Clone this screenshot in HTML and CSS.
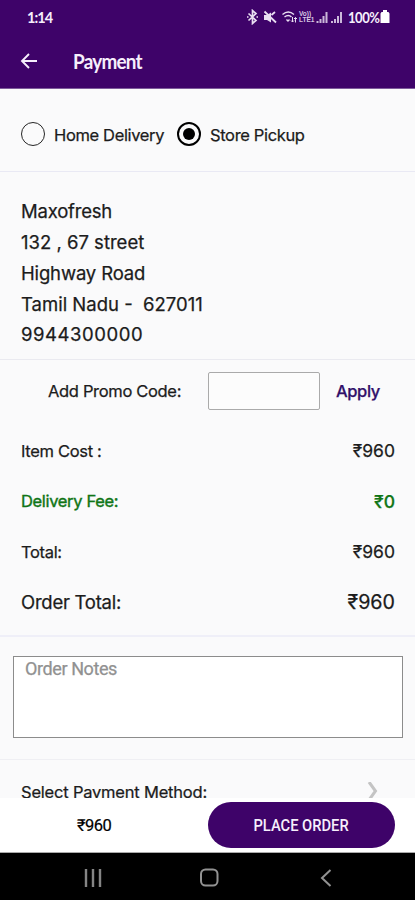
FILE: index.html
```html
<!DOCTYPE html>
<html lang="en">
<head>
<meta charset="utf-8">
<meta name="viewport" content="width=device-width, initial-scale=1">
<title>Payment</title>
<link rel="stylesheet" href="styles.css">
</head>
<body>
<div class="screen">
  <header class="header">
    <div class="status">
      <span class="clock">1:14</span>
      <span class="status-right">
        <svg class="status-icons" width="98" height="16" viewBox="0 0 98 16" fill="none" stroke="#e9dff2" stroke-width="1.5">
          <path d="M2.5 4.5l7.500 7-3.500 3v-13l3.500 3-7.500 7M1 8h1.500M10.500 8H12" stroke-width="1.700"/>
          <path d="M18 6h3l4-2.500v10L21 11h-3z" fill="#e9dff2" stroke="none"/>
          <path d="M18.500 2.500l11.500 11M25.500 6l3.500-3" stroke-width="1.800"/>
          <path d="M36.500 5.500c3.500-3 8-3 11.500 0M38.500 8c2.500-2 5-2 7 0M40.500 10.500l1.500 1.500 1.500-1.500" stroke-width="1.400"/>
          <path d="M46.500 8v5M45 11.500l1.500 1.500 1.500-1.500M49.500 13.500v-5M48 10l1.500-1.500L51 10" stroke-width="1"/>
          <path d="M71.500 14v-2M74.500 14v-4M77.500 14V7M80.500 14V3M86 14v-2M89 14v-4M92 14V7M95 14V3" stroke-width="2" stroke="#cbb8da"/>
        </svg>
        <span class="volte"><span>Vo))</span><span>LTE1</span></span>
        <span class="percent">100%</span>
        <svg class="battery" width="10" height="14" viewBox="0 0 10 14"><path d="M3 0h4v2h1.500l1 1.500V13H.5V3.500l1-1.500H3z" fill="#fff"/></svg>
      </span>
    </div>
    <div class="appbar">
      <svg width="18" height="18" viewBox="0 0 18 18" fill="none" stroke="#f6effc" stroke-width="1.900"><path d="M17 9H2M9 2L2 9l7 7"/></svg>
      <h1 class="title">Payment</h1>
    </div>
  </header>
  <main class="content">
    <section class="delivery">
      <span class="radio"></span><span class="option home">Home Delivery</span>
      <span class="radio checked"></span><span class="option store">Store Pickup</span>
    </section>
    <address class="address">
      <span class="name">Maxofresh</span>
      <span>132 , 67 street</span>
      <span class="road">Highway Road</span>
      <span>Tamil Nadu -&nbsp; 627011</span>
      <span class="phone">9944300000</span>
    </address>
    <section class="bill">
      <div class="promo">
        <label class="promo-label" for="promo">Add Promo Code:</label>
        <input class="promo-input" id="promo" type="text">
        <span class="apply">Apply</span>
      </div>
      <div class="row"><span class="label">Item Cost :</span><span class="amount">₹960</span></div>
      <div class="row free"><span class="label">Delivery Fee:</span><span class="amount">₹0</span></div>
      <div class="row"><span class="label">Total:</span><span class="amount">₹960</span></div>
      <div class="row grand"><span class="label">Order Total:</span><span class="amount">₹960</span></div>
    </section>
    <section class="notes"><textarea class="notes-input" placeholder="Order Notes"></textarea></section>
    <section class="method">
      <span class="method-label">Select Payment Method:</span>
      <svg width="14" height="20" viewBox="0 0 14 20" fill="none" stroke="#c4c4c4" stroke-width="3"><path d="M3 0l6.500 9L3 18"/></svg>
    </section>
  </main>
  <footer class="checkout">
    <span class="sum">₹960</span>
    <button class="place"><span class="place-label">PLACE ORDER</span></button>
  </footer>
  <nav class="nav">
    <svg width="18" height="18" viewBox="0 0 18 18" stroke="#858585" stroke-width="2.400"><path d="M2 0v18M9 0v18M16 0v18"/></svg>
    <svg width="20" height="19" viewBox="0 0 20 19" fill="none" stroke="#929292" stroke-width="2"><rect x="2" y="1.500" width="16.500" height="16" rx="4.500"/></svg>
    <svg width="12" height="18" viewBox="0 0 12 18" fill="none" stroke="#929292" stroke-width="2"><path d="M10.500 1L2 9l8.500 8"/></svg>
  </nav>
</div>
</body>
</html>
```
FILE: styles.css
```css
* { box-sizing: border-box; }
body { margin: 0; font-family: Inter, "Liberation Sans", sans-serif; color: #1c1c1c; }
.screen { width: 415px; height: 900px; display: flex; flex-direction: column; overflow: hidden; background: #fafafb; white-space: nowrap; }
.header { height: 89px; flex: none; background: #3e0369; border-bottom: 1px solid #7d5b9b; color: #f6effc; font-family: Lato, sans-serif; }
.status { height: 34px; display: flex; justify-content: space-between; align-items: center; padding: 0 25px 0 27px; }
.clock { font-size: 14.5px; font-weight: 700; letter-spacing: -0.9px; }
.status-right { display: flex; align-items: center; position: relative; }
.status-icons { margin-right: 4px; }
.volte { position: absolute; left: 53px; top: 2px; display: flex; flex-direction: column; font: 700 6.5px/6.5px "Liberation Sans", sans-serif; color: #d6c6e2; }
.percent { width: 33px; font-size: 14.5px; font-weight: 700; letter-spacing: -0.5px; transform: scaleX(0.9); transform-origin: left; }
.battery { margin-left: -1px; }
.appbar { height: 54px; display: flex; align-items: center; padding-left: 20px; gap: 35px; }
.title { margin: 0; font-size: 20px; line-height: 24px; font-weight: 700; letter-spacing: -0.8px; transform: scaleX(0.945); transform-origin: left; }
.content { height: 709px; flex: none; overflow: hidden; -webkit-text-stroke: 0.25px currentColor; }
.delivery { height: 83px; display: flex; align-items: center; padding: 8px 0 0 21px; border-bottom: 1px solid #e9e9f4; }
.radio { width: 24px; height: 24px; flex: none; border: 1.5px solid #252525; border-radius: 50%; margin-right: 9px; }
.checked { display: flex; align-items: center; justify-content: center; border: 2px solid #000; }
.checked::before { content: ""; width: 12px; height: 12px; border-radius: 50%; background: #000; }
.option { font-size: 16.5px; line-height: 24px; letter-spacing: -0.35px; padding-top: 2px; }
.home { width: 123px; }
.address { height: 188px; padding: 24.4px 0 0 21px; border-bottom: 1px solid #eaeaf0; display: flex; flex-direction: column; font-style: normal; font-size: 18.5px; line-height: 30.7px; }
.name { letter-spacing: -0.2px; }
.road { letter-spacing: -0.15px; }
.phone { letter-spacing: 0.55px; }
.bill { height: 277px; padding: 0 20px 0 21px; border-bottom: 2px solid #efeff8; }
.promo { height: 62px; display: flex; align-items: center; padding-left: 27px; }
.promo-label { width: 160px; font-size: 16.5px; letter-spacing: -0.33px; }
.promo-input { width: 112px; height: 38px; border: 1px solid #aaa; border-radius: 2px; background: #fcfcfc; }
.apply { margin-left: 16px; font-size: 16.5px; font-weight: 500; letter-spacing: -0.4px; color: #31106a; }
.row { height: 50.5px; display: flex; align-items: center; justify-content: space-between; font-size: 16.5px; position: relative; top: 3.4px; }
.label { letter-spacing: -0.33px; }
.amount { font-size: 17.5px; }
.free { color: #107516; }
.free .label { -webkit-text-stroke-width: 0.4px; }
.free .amount { font-weight: 500; }
.grand { font-size: 18.5px; }
.grand .label { letter-spacing: -0.25px; }
.grand .amount { font-size: 19.7px; }
.notes { height: 123px; padding: 19px 12px 0 13px; border-bottom: 1px solid #efeff3; }
.notes-input { display: block; width: 390px; height: 82px; padding: 0 11px; border: 1px solid #8c8c8c; border-radius: 0; resize: none; background: #fff; font: 18px/24px Roboto, sans-serif; letter-spacing: -0.4px; }
.notes-input::placeholder { color: #919191; opacity: 1; }
.method { display: flex; justify-content: space-between; align-items: center; height: 63px; padding: 0 35px 0 21px; font-size: 16.5px; }
.method-label { letter-spacing: -0.2px; }
.checkout { height: 55px; flex: none; display: flex; align-items: center; background: #fff; padding: 0 20px 0 77px; justify-content: space-between; border-bottom: 1px solid #aaa; }
.sum { font: 400 16.5px Roboto, sans-serif; letter-spacing: -0.5px; -webkit-text-stroke: 0.2px currentColor; color: #000; }
.place { width: 187px; height: 46px; padding: 0; border: 0; border-radius: 23px; background: #3e0369; color: #f6effc; font: 500 17px Roboto, sans-serif; }
.place-label { display: inline-block; transform: scaleX(0.865); }
.nav { height: 47px; flex: none; display: flex; align-items: center; background: #000; padding: 2px 0 0 84px; }
.nav svg + svg { margin-left: 97px; }
.nav svg + svg + svg { margin-left: 101px; }
```
